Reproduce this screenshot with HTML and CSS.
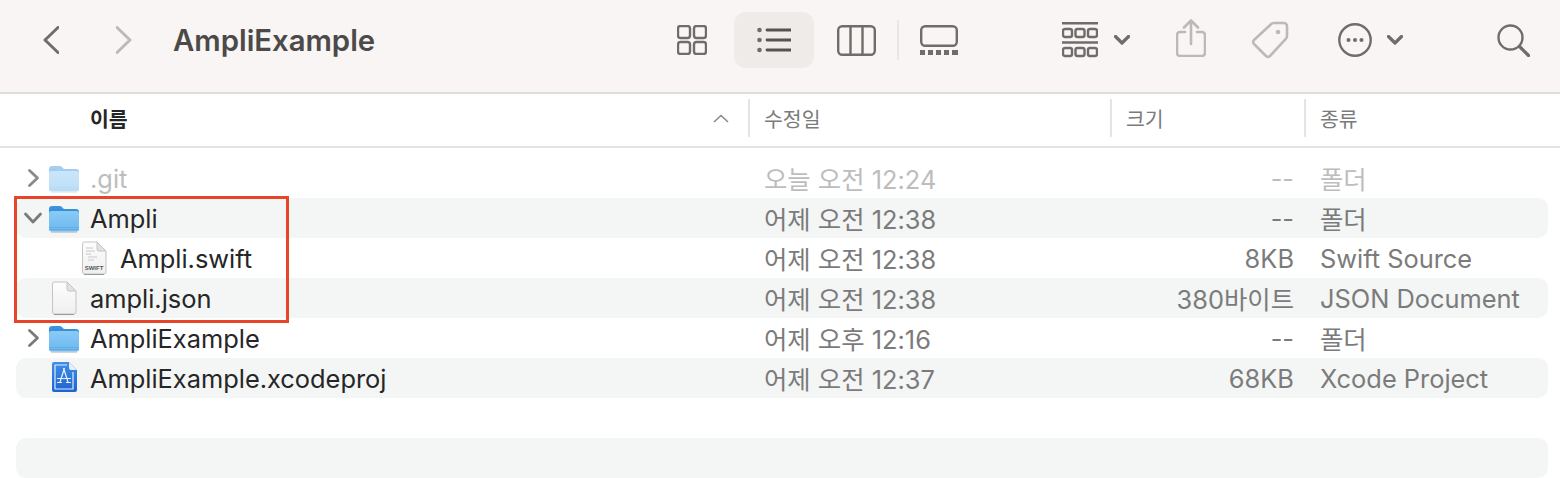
FILE: index.html
```html
<!DOCTYPE html>
<html lang="ko">
<head>
  <meta charset="UTF-8">
  <meta name="viewport" content="width=device-width, initial-scale=1.0">
  <title>AmpliExample</title>
  <link rel="stylesheet" href="styles.css">
</head>
<body>
  <svg class="defs" width="0" height="0">
    <defs>
      <linearGradient id="folderBack" x1="0" y1="0" x2="0" y2="1">
        <stop offset="0" stop-color="#3f97e0"/>
        <stop offset="1" stop-color="#2f7fcb"/>
      </linearGradient>
      <linearGradient id="folderFront" x1="0" y1="0" x2="0" y2="1">
        <stop offset="0" stop-color="#88cbf6"/>
        <stop offset="1" stop-color="#6db7ee"/>
      </linearGradient>
      <linearGradient id="docFill" x1="0" y1="0" x2="0" y2="1">
        <stop offset="0" stop-color="#fdfdfd"/>
        <stop offset="1" stop-color="#efefef"/>
      </linearGradient>
      <linearGradient id="xcodeBlue" x1="0" y1="0" x2="0" y2="1">
        <stop offset="0" stop-color="#3f8ee8"/>
        <stop offset="1" stop-color="#1f63d0"/>
      </linearGradient>
      <symbol id="folder" viewBox="0 0 32 30">
        <path d="M1 6a3 3 0 0 1 3-3h7.500c1.200 0 1.800.4 2.600 1.200L16 6h12a3 3 0 0 1 3 3v6H1z" fill="url(#folderBack)"/>
        <rect x="1" y="8" width="30" height="20.500" rx="2.500" fill="url(#folderFront)"/>
        <path d="M1.500 24.500h29M1.500 26.500h29" stroke="#4f9cd8" stroke-opacity=".4" fill="none"/>
        <path d="M3 29.200h26" stroke="#8a8a8a" stroke-opacity=".5" fill="none"/>
      </symbol>
      <symbol id="doc" viewBox="0 0 28 34">
        <path d="M2.500 3a2 2 0 0 1 2-2H17l9 9v21a2 2 0 0 1-2 2H4.500a2 2 0 0 1-2-2z" fill="url(#docFill)" stroke="#c4c4c4"/>
        <path d="M17 1v7a2 2 0 0 0 2 2h7z" fill="#e2e2e2" stroke="#c4c4c4"/>
        <path d="M4 33.500h20" stroke="#9a9a9a" fill="none"/>
      </symbol>
    </defs>
  </svg>

  <div class="toolbar">
    <svg class="tool back" width="16" height="28" viewBox="0 0 16 28"><path d="M15 1.500 2 14l13 12.500" class="ln"/></svg>
    <svg class="tool forward dim" width="16" height="28" viewBox="0 0 16 28"><path d="M1 1.500 14 14 1 26.500" class="ln"/></svg>
    <span class="title">AmpliExample</span>

    <svg class="tool v-icons" width="30" height="30" viewBox="0 0 30 30">
      <rect x="1" y="1" width="12" height="12" rx="2.500" class="ln"/><rect x="17" y="1" width="12" height="12" rx="2.500" class="ln"/>
      <rect x="1" y="17" width="12" height="12" rx="2.500" class="ln"/><rect x="17" y="17" width="12" height="12" rx="2.500" class="ln"/>
    </svg>
    <div class="view-active">
      <svg width="34" height="26" viewBox="0 0 34 26">
        <circle cx="2.500" cy="3" r="2.300" class="fl"/><circle cx="2.500" cy="13" r="2.300" class="fl"/><circle cx="2.500" cy="23" r="2.300" class="fl"/>
        <path d="M10 3h24M10 13h24M10 23h24" class="ln dark"/>
      </svg>
    </div>
    <svg class="tool v-cols" width="39" height="31" viewBox="0 0 39 31">
      <rect x="1.200" y="1.200" width="36.600" height="28.600" rx="4" class="ln"/><path d="M13.500 1.500v28M25.500 1.500v28" class="ln"/>
    </svg>
    <span class="tool-sep"></span>
    <svg class="tool v-gallery" width="38" height="30" viewBox="0 0 38 30">
      <rect x="1.200" y="1.200" width="35.600" height="19.600" rx="4" class="ln"/>
      <rect x="0" y="25" width="5" height="5" class="fl"/><rect x="8" y="25" width="5" height="5" class="fl"/><rect x="16" y="25" width="5" height="5" class="fl"/><rect x="24" y="25" width="5" height="5" class="fl"/><rect x="32" y="25" width="6" height="5" class="fl"/>
    </svg>

    <svg class="tool group" width="36" height="36" viewBox="0 0 36 36">
      <path d="M0 1.200h36M0 20.500h36" class="ln"/>
      <rect x="1" y="7" width="9" height="8" rx="2" class="ln"/><rect x="13.500" y="7" width="9" height="8" rx="2" class="ln"/><rect x="26" y="7" width="9" height="8" rx="2" class="ln"/>
      <rect x="1" y="26" width="9" height="8" rx="2" class="ln"/><rect x="13.500" y="26" width="9" height="8" rx="2" class="ln"/><rect x="26" y="26" width="9" height="8" rx="2" class="ln"/>
    </svg>
    <svg class="tool caret" width="16" height="10" viewBox="0 0 16 10"><path d="M1.500 1.500 8 8l6.500-6.500" class="ln thick"/></svg>
    <svg class="tool share dim" width="30" height="38" viewBox="0 0 30 38">
      <path d="M9 13H4a3 3 0 0 0-3 3v18a3 3 0 0 0 3 3h22a3 3 0 0 0 3-3V16a3 3 0 0 0-3-3h-5" class="ln"/>
      <path d="M15 25V2M8 8.500 15 1.500l7 7" class="ln"/>
    </svg>
    <svg class="tool tag dim" width="38" height="38" viewBox="0 0 38 38">
      <path d="M23 2h10a3 3 0 0 1 3 3v10a4 4 0 0 1-1.200 2.800L19 35a3 3 0 0 1-4 0L3 23a3 3 0 0 1 0-4L20 3.200A4 4 0 0 1 23 2z" class="ln"/>
      <circle cx="27" cy="11" r="2.300" class="fl"/>
    </svg>
    <svg class="tool more" width="34" height="34" viewBox="0 0 34 34">
      <circle cx="17" cy="17" r="15.700" class="ln"/>
      <circle cx="10.500" cy="17" r="2" class="fl"/><circle cx="17" cy="17" r="2" class="fl"/><circle cx="23.500" cy="17" r="2" class="fl"/>
    </svg>
    <svg class="tool caret2" width="16" height="10" viewBox="0 0 16 10"><path d="M1.500 1.500 8 8l6.500-6.500" class="ln thick"/></svg>
    <svg class="tool search" width="33" height="33" viewBox="0 0 33 33">
      <circle cx="13.500" cy="13.500" r="12" class="ln"/><path d="M22.500 22.500 31.500 31.500" class="ln thick"/>
    </svg>
  </div>

  <div class="list-head">
    <div class="col-name">이름
      <svg class="sort" width="16" height="9" viewBox="0 0 16 9"><path d="M1 8l7-6.500L15 8"/></svg>
    </div>
    <div class="col-date">수정일</div>
    <div class="col-size">크기</div>
    <div class="col-kind">종류</div>
  </div>

  <div class="rows">
    <div class="row faded">
      <div class="name">
        <svg class="disc" width="14" height="20" viewBox="0 0 14 20"><path d="M2.500 2.500 10.500 10l-8 7.500"/></svg>
        <svg class="ic-folder" width="32" height="30"><use href="#folder"/></svg>
        <span>.git</span>
      </div>
      <div>오늘 오전 12:24</div><div class="size">--</div><div class="kind">폴더</div>
    </div>
    <div class="row">
      <div class="name">
        <svg class="disc open" width="20" height="14" viewBox="0 0 20 14"><path d="M2.500 3 10 11l7.500-8"/></svg>
        <svg class="ic-folder" width="32" height="30"><use href="#folder"/></svg>
        <span>Ampli</span>
      </div>
      <div>어제 오전 12:38</div><div class="size">--</div><div class="kind">폴더</div>
    </div>
    <div class="row">
      <div class="name child">
        <svg class="ic-doc" width="28" height="34" viewBox="0 0 28 34">
          <use href="#doc" width="28" height="34"/>
          <path d="M6 7h7M6 10h9M6 13h5M8 16h9M8 19h6" stroke="#c9c9c9" fill="none"/>
          <text x="14" y="29" class="swift">SWIFT</text>
        </svg>
        <span>Ampli.swift</span>
      </div>
      <div>어제 오전 12:38</div><div class="size">8KB</div><div class="kind">Swift Source</div>
    </div>
    <div class="row">
      <div class="name">
        <svg class="ic-doc plain" width="28" height="34"><use href="#doc"/></svg>
        <span>ampli.json</span>
      </div>
      <div>어제 오전 12:38</div><div class="size">380바이트</div><div class="kind">JSON Document</div>
    </div>
    <div class="row">
      <div class="name">
        <svg class="disc" width="14" height="20" viewBox="0 0 14 20"><path d="M2.500 2.500 10.500 10l-8 7.500"/></svg>
        <svg class="ic-folder" width="32" height="30"><use href="#folder"/></svg>
        <span>AmpliExample</span>
      </div>
      <div>어제 오후 12:16</div><div class="size">--</div><div class="kind">폴더</div>
    </div>
    <div class="row">
      <div class="name">
        <svg class="ic-doc plain" width="28" height="32" viewBox="0 0 28 32">
          <path d="M2 3a2 2 0 0 1 2-2h15l8 8v20a2 2 0 0 1-2 2H4a2 2 0 0 1-2-2z" fill="url(#xcodeBlue)"/>
          <path d="M19 1v6a2 2 0 0 0 2 2h6z" fill="#e6eefa"/>
          <path d="M17 4H5v24h18V11" fill="none" stroke="#fff" stroke-opacity=".85" stroke-width="1.200"/>
          <path d="M14.500 7 10 21M13.500 7 18 21M7 17.500h14M7 21.500h5M16 21.500h5" fill="none" stroke="#fff" stroke-opacity=".9" stroke-width="1.200"/>
        </svg>
        <span>AmpliExample.xcodeproj</span>
      </div>
      <div>어제 오전 12:37</div><div class="size">68KB</div><div class="kind">Xcode Project</div>
    </div>
    <div class="row"></div>
    <div class="row"></div>
  </div>

  <!-- highlight drawn over the list -->
  <div class="highlight"></div>
</body>
</html>
```

FILE: styles.css
```css
body {
  margin: 0;
  width: 1560px;
  height: 478px;
  overflow: hidden;
  position: relative;
  background: #fff;
  font-family: Inter, "Noto Sans CJK KR", sans-serif;
  color: #262626;
}
.defs {
  position: absolute;
}

/* toolbar */
.toolbar {
  height: 80px;
  padding-bottom: 12px;
  display: flex;
  align-items: center;
  background: #f8f5f4;
  border-bottom: 2px solid #dedddc;
}
.tool {
  flex: none;
}
.ln {
  fill: none;
  stroke: #716c69;
  stroke-width: 2.400;
  stroke-linecap: round;
  stroke-linejoin: round;
}
.ln.thick {
  stroke-width: 3.200;
}
.ln.dark {
  stroke: #56524f;
  stroke-width: 2.800;
}
.fl {
  fill: #716c69;
}
.dim .ln {
  stroke: #bcb9b7;
  stroke-width: 2.600;
}
.dim .fl {
  fill: #bcb9b7;
}
.back {
  margin-left: 43px;
}
.back .ln,
.forward .ln {
  stroke-width: 3;
}
.forward {
  margin-left: 57px;
}
.title {
  margin-left: 41px;
  width: 504px;
  font-size: 29.3px;
  font-weight: 600;
  color: #4b4a49;
  white-space: nowrap;
}
.view-active {
  width: 80px;
  height: 56px;
  margin-left: 27px;
  display: flex;
  align-items: center;
  justify-content: center;
  background: #eeebe9;
  border-radius: 12px;
}
.v-cols {
  margin-left: 23px;
}
.tool-sep {
  width: 2px;
  height: 40px;
  margin-left: 21px;
  background: #e8e6e4;
}
.v-gallery {
  margin-left: 21px;
}
.group {
  margin-left: 104px;
}
.caret {
  margin-left: 16px;
}
.share {
  margin-left: 46px;
  margin-top: -4px;
}
.tag {
  margin-left: 45px;
}
.more {
  margin-left: 49px;
}
.caret2 {
  margin-left: 15px;
}
.search {
  margin-left: 94px;
}

/* column headers */
.list-head {
  height: 48px;
  padding-bottom: 4px;
  display: flex;
  align-items: center;
  font-size: 20.5px;
  color: #7b7b7b;
  border-bottom: 2px solid #e4e4e4;
}
.list-head > div {
  height: 38px;
  display: flex;
  align-items: center;
  flex: none;
  box-sizing: border-box;
}
.col-name {
  width: 748px;
  padding-left: 90px;
  font-weight: 700;
  color: #262626;
  position: relative;
}
.sort {
  fill: none;
  stroke: #8a8a8a;
  stroke-width: 1.600;
  margin-left: 585px;
}
.col-date,
.col-size,
.col-kind {
  border-left: 2px solid #e4e4e4;
  padding-left: 14px;
}
.col-date {
  width: 362px;
}
.col-size {
  width: 194px;
}

/* rows */
.rows {
  padding: 10px 12px 0 16px;
}
.row {
  height: 40px;
  display: grid;
  grid-template-columns: 748px 200px 330px 1fr;
  align-items: center;
  font-size: 25.4px;
  color: #7b7b7b;
  white-space: nowrap;
}
.row:nth-child(even) {
  background: #f4f5f5;
  border-radius: 10px;
}
.name {
  position: relative;
  height: 40px;
  padding-left: 74px;
  display: flex;
  align-items: center;
  color: #262626;
}
.name.child {
  padding-left: 104px;
}
.size {
  text-align: right;
}
.kind {
  padding-left: 26px;
}
.faded,
.faded .name {
  color: #bdbdbd;
}
.faded .ic-folder {
  opacity: .45;
}
.faded .disc {
  stroke: #8a8a8a;
}

/* icons sit in the gutter left of the name */
.disc {
  position: absolute;
  left: 11px;
  top: 10px;
  fill: none;
  stroke: #7a7a7a;
  stroke-width: 2.800;
  stroke-linecap: round;
  stroke-linejoin: round;
}
.disc.open {
  left: 7px;
  top: 13px;
}
.ic-folder {
  position: absolute;
  left: 32px;
  top: 5px;
}
.ic-doc {
  position: absolute;
  left: 64px;
  top: 3px;
}
.ic-doc.plain {
  left: 34px;
}
.swift {
  font-family: "Liberation Sans", sans-serif;
  font-size: 6px;
  font-weight: 700;
  fill: #555;
  text-anchor: middle;
}

.highlight {
  position: absolute;
  left: 14px;
  top: 196px;
  width: 269px;
  height: 121px;
  border: 3px solid #e8442a;
}
```
